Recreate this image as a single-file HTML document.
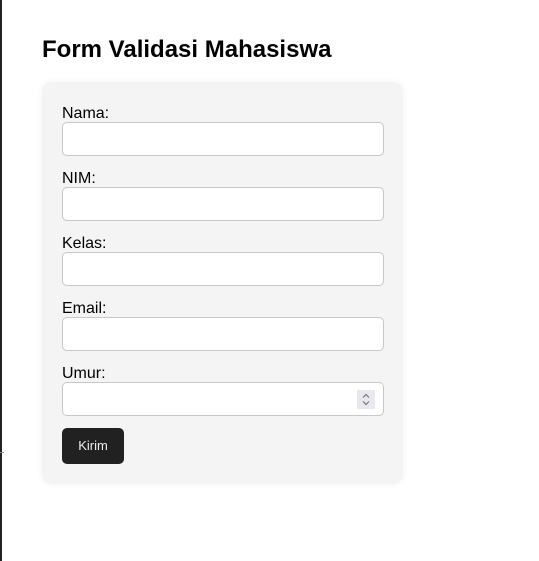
<!DOCTYPE html>
<html><head><style>
body{margin:0;width:539px;height:561px;background:#fff;font-family:"Liberation Sans",sans-serif;position:relative;overflow:hidden}
.bar{position:absolute;left:0;top:0;width:2px;height:561px;background:#222}
.tick{position:absolute;left:0;top:452px;width:4px;height:1px;background:#888}
h1{position:absolute;left:42px;top:36px;margin:0;font-size:24px;font-weight:bold;color:#000;line-height:28px}
.box{position:absolute;left:42px;top:82px;width:361px;height:402px;background:#f4f4f4;border-radius:10px;box-shadow:0 0 8px rgba(0,0,0,0.05)}
label{position:absolute;left:20px;font-size:16px;color:#000;line-height:18px}
.in{position:absolute;left:20px;width:320px;height:32px;background:#fff;border:1px solid #c8c8c8;border-radius:5px}
.sp{position:absolute;right:8px;top:7px;width:18px;height:19px;background:#e8e8ee}
.btn{position:absolute;left:20px;top:346px;width:62px;height:36px;background:#212121;border-radius:5px;color:#eee;font-size:13px;line-height:36px;text-align:center}
</style></head><body>
<div class="bar"></div><div class="tick"></div>
<h1>Form Validasi Mahasiswa</h1>
<div class="box">
<label style="top:23px">Nama:</label><div class="in" style="top:40px"></div>
<label style="top:88px">NIM:</label><div class="in" style="top:105px"></div>
<label style="top:153px">Kelas:</label><div class="in" style="top:170px"></div>
<label style="top:218px">Email:</label><div class="in" style="top:235px"></div>
<label style="top:283px">Umur:</label><div class="in" style="top:300px"><div class="sp"><svg width="18" height="19" viewBox="0 0 18 19"><path d="M6 7.5L9 4.5L12 7.5M6 11.5L9 14.5L12 11.5" fill="none" stroke="#777" stroke-width="1.2"/></svg></div></div>
<div class="btn">Kirim</div>
</div>
</body></html>
